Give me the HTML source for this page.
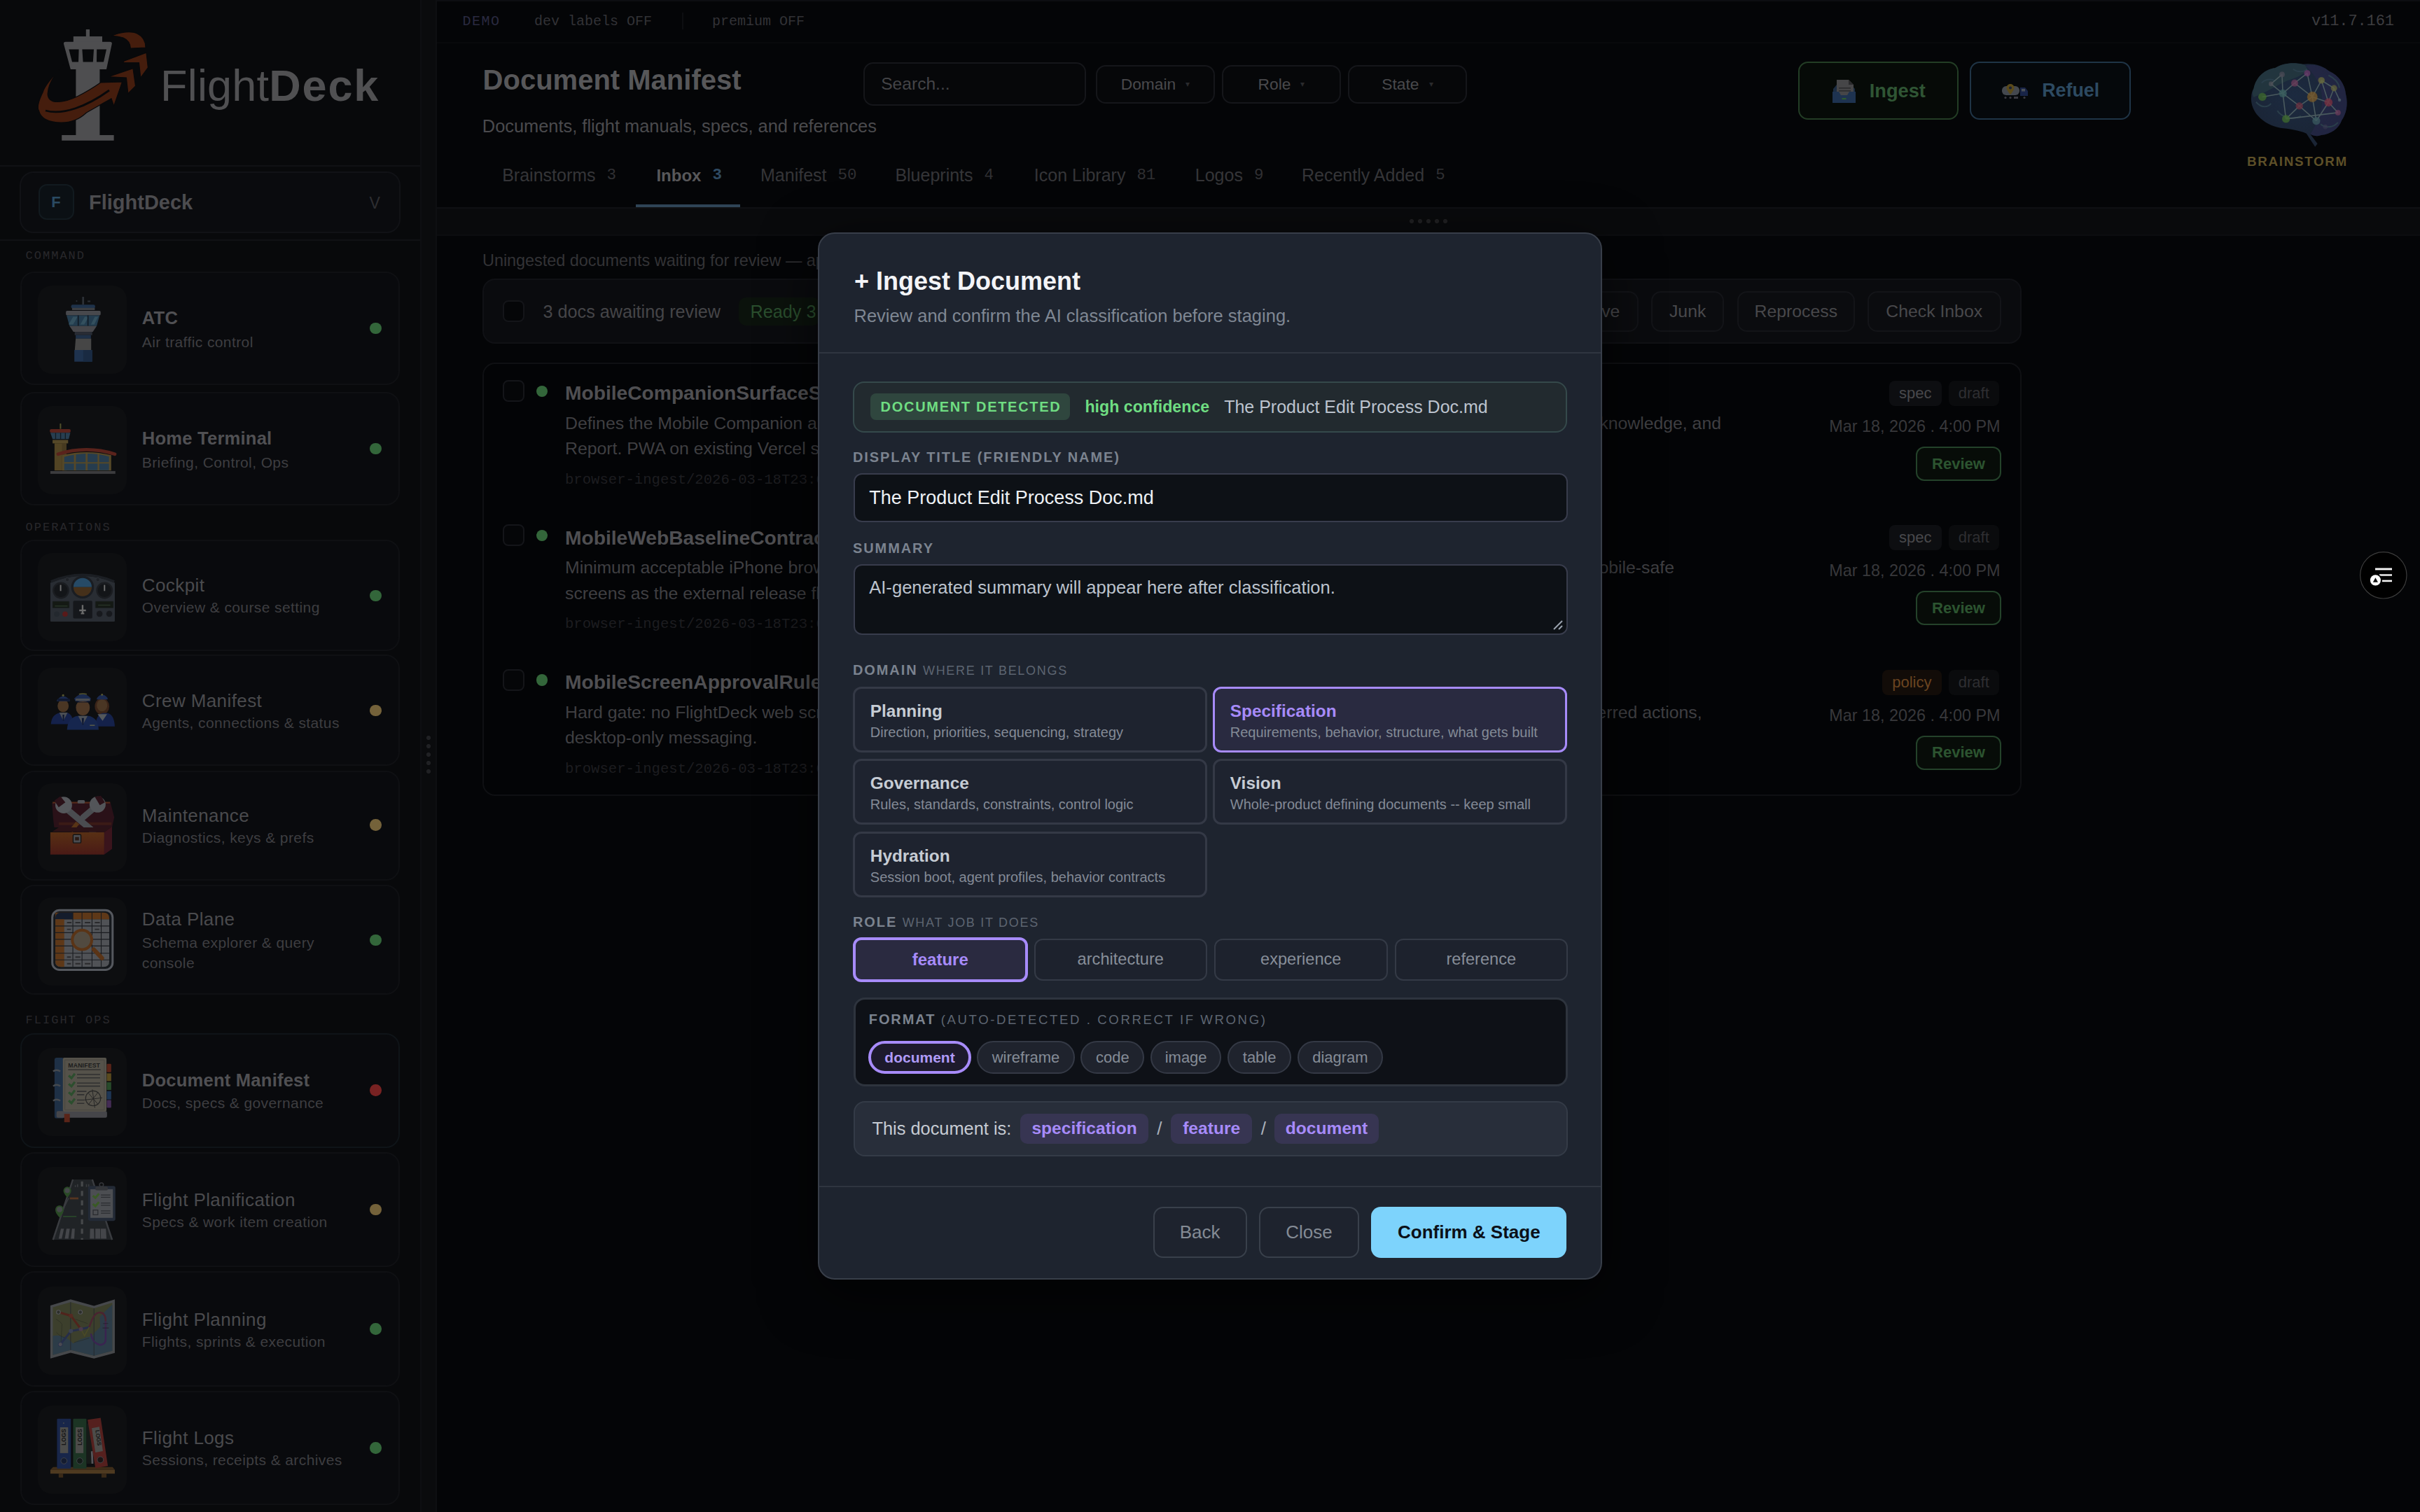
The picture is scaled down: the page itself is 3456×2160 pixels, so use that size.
<!DOCTYPE html>
<html><head><meta charset="utf-8">
<style>
*{box-sizing:border-box;margin:0;padding:0}
html,body{width:3456px;height:2160px;overflow:hidden;background:#040507}
#root{position:relative;width:1728px;height:1080px;zoom:2;font-family:"Liberation Sans",sans-serif;background:#040507;overflow:hidden}
.abs{position:absolute}
.mono{font-family:"Liberation Mono",monospace}
#sb{position:absolute;left:0;top:0;width:300px;height:1080px;background:#08090b}
#handle{position:absolute;left:300px;top:0;width:12px;height:1080px;background:#0a0b0d;border-left:1px solid #0e0f12;border-right:1px solid #0e0f12}
#main{position:absolute;left:312px;top:0;width:1416px;height:1080px;background:#040507}
#modal{position:absolute;left:584px;top:166px;width:560px;height:748px;background:#1e242f;border:1px solid #383e49;border-radius:12px;box-shadow:0 10px 40px rgba(0,0,0,.6)}
#modal .det{border:1.1px solid #35494b;background:#222a2f;border-radius:8px;display:flex;align-items:center;padding-left:11.5px}
#modal .badge{display:inline-block;height:19px;line-height:19px;padding:0 6.5px 0 7.3px;border-radius:4px;background:#2f463e;color:#6fdd82;font-size:10px;font-weight:bold;letter-spacing:.85px}
#modal .lbl{font-size:10px;line-height:10px;font-weight:bold;letter-spacing:.95px;color:#7b838f;white-space:nowrap}
#modal .lbl .sub{font-weight:normal;font-size:9px;letter-spacing:.85px;color:#5d6571}
#modal .lbl .sub.f{font-size:9.3px;letter-spacing:1.3px}
#modal .inp{background:#0d1116;border:1.2px solid #383c4c;border-radius:6px}
#modal .dcard{width:253px;height:47px;border:1.5px solid #343946;border-radius:6px;background:#1e232f}
#modal .dcard .dt{position:absolute;left:10.9px;top:10px;font-size:12.2px;line-height:12.2px;font-weight:bold;color:#c6ccd4}
#modal .dcard .dd{position:absolute;left:10.9px;top:26px;font-size:10px;line-height:10px;color:#838a96;white-space:nowrap}
#modal .dcard.sel{border-color:#a78bfa;background:#292a40}
#modal .dcard.sel .dt{color:#a78bfa}
#modal .roles{display:grid;grid-template-columns:repeat(4,123.75px);gap:5px;width:510px}
#modal .rb{height:30.4px;border:1.2px solid #343a46;border-radius:6px;display:flex;align-items:center;justify-content:center;font-size:11.8px;color:#878e99;background:#1d222d}
#modal .rb.sel{margin:-1px -.75px;height:32.4px;border:2px solid #a78bfa;background:#2a2a40;color:#a78bfa;font-weight:bold;font-size:12px}
#modal .fmt{background:#0e1117;border:1.5px solid #2e343e;border-radius:8px}
#modal .chips{display:flex;gap:4.3px}
#modal .chip{display:inline-flex;align-items:center;justify-content:center;height:23.9px;border-radius:12px;background:#1f232d;border:1.1px solid #343945;font-size:11px;color:#858c97}
#modal .chip.sel{border:2px solid #a78bfa;background:#1d1a2c;color:#b09af7;font-weight:bold;font-size:10.5px}
#modal .sumbox{background:#282e3a;border:1.1px solid #343b47;border-radius:8px;display:flex;align-items:center}
#modal .pill{display:inline-flex;align-items:center;justify-content:center;height:21.6px;border-radius:5px;background:#373552;color:#a78bfa;font-weight:bold;font-size:12.3px}
#modal .slash{display:inline-block;width:16px;text-align:center;font-size:13px;color:#aab1bb}
#modal .btn2{border:1.1px solid #39404b;border-radius:7px;display:flex;align-items:center;justify-content:center;font-size:13px;color:#848b95;background:#1e232e}
#modal .cta{border-radius:7px;display:flex;align-items:center;justify-content:center;font-size:13px;font-weight:bold;color:#0b1018;background:#7dd3fc}
.hbox{border:1px solid #15161a;border-radius:7px;background:#060709;display:flex;align-items:center}
.hbox.c{justify-content:center}
.caret{font-size:6px;color:#2a2a2d;margin-left:7px}
.hbtn{border:1px solid;border-radius:7px;background:#06080a;display:flex;align-items:center;justify-content:center}
.tab{top:119.1px;font-size:12.5px;line-height:12.5px;color:#353538;white-space:nowrap}
.tab .cnt{font-family:"Liberation Mono",monospace;font-size:11.2px;margin-left:8px;color:#303033;position:relative;top:-1.6px}
.tab.act{color:#58585a;font-weight:bold;font-size:12px}
.tab.act .cnt{color:#2f4a62;font-weight:bold}
.tbar{background:#0a0b0e;border:1px solid #101115;border-radius:9px}
.tbtn{top:208px;height:29px;border:1px solid #131418;border-radius:7px;background:#0b0c0f;display:flex;align-items:center;justify-content:center;font-size:12.4px;color:#48484b}
.cb{width:15.5px;height:15.5px;border:1px solid #141519;border-radius:4px;background:#050608}
.list{background:#030406;border:1px solid #0f1013;border-radius:9px}
.dot{width:8.2px;height:8.2px;border-radius:50%}
.dot.g{background:#33663a}
.dot.y{background:#74623a}
.dot.r{background:#782222}
.it{font-size:14.1px;line-height:14.1px;font-weight:bold;color:#4f4f52;white-space:nowrap}
.idesc{font-size:12.4px;line-height:12.4px;color:#3f3f42;white-space:nowrap}
.ipath{font-family:"Liberation Mono",monospace;font-size:10.3px;line-height:10.5px;color:#1d1d20;white-space:nowrap}
.tag{height:18px;padding:0 7px;border-radius:4px;font-size:11px;line-height:18px;background:#0d0e11;color:#48484b}
.tag.draft{background:#0a0b0d;color:#2e2e31}
.tag.policy{background:#120c08;color:#6a4420}
.idate{font-size:11.7px;line-height:11.7px;color:#38383b;white-space:nowrap}
.rev{width:60.6px;height:24.5px;border:1.2px solid #24422a;border-radius:6px;background:#070c08;display:flex;align-items:center;justify-content:center;font-size:11px;font-weight:bold;color:#2c5430}
.wsc{border:1px solid #111216;border-radius:10px;background:#0a0b0e}
.slbl{font-family:"Liberation Mono",monospace;font-size:8.5px;line-height:8.5px;letter-spacing:1px;color:#28282b}
.scard{border:1px solid #0f1013;border-radius:10px;background:#090a0d}
.scard.act{border-color:#0f1418}
.ibox{width:63.5px;height:63px;border-radius:10px;background:#0d0e10}
.stitle{color:#4a4a4d;white-space:nowrap;letter-spacing:.2px}
.stitle.b{font-weight:bold;color:#505053;letter-spacing:.1px}
.ssub{font-size:10.5px;line-height:10.5px;letter-spacing:.2px;color:#3e3e41;white-space:nowrap}
.ibox svg{filter:brightness(.82) saturate(.85)}
@media (max-width:2000px){html,body{width:1728px;height:1080px}#root{zoom:1}}

</style></head><body><div id="root">
<div id="sb"></div>
<div id="handle"></div>
<svg class="abs" style="left:0;top:0" width="120" height="110" viewBox="0 0 120 110">
<g fill="#4e4e50">
<rect x="61.4" y="21" width="2.6" height="5.5"/>
<rect x="52.4" y="26" width="20.6" height="4.2"/>
<path d="M47 29.9H78.4Q80.4 29.9 79.8 31.8L76 49.5H50.4L45.6 31.8Q45 29.9 47 29.9Z"/>
<rect x="54.2" y="49" width="17" height="48"/>
<rect x="44.1" y="96.5" width="37.2" height="3.9"/>
</g>
<path d="M49.2 35.2H56.3L56 44.2H51.5zM58.7 35.2H67L66.4 44.2H59.3zM69.1 35.2H76L74 44.2H69z" fill="#08090b"/>
<g fill="#451d0d" stroke="#08090b" stroke-width=".6">
<path d="M45.6 46C38 54 31.5 62 30.7 65.6C27.5 72 26.5 77 27.7 79C29 84.5 34 87.5 43.8 87.6C52 87.6 58 84 61.7 80.5C68 77 74 73.5 79.5 70.4L81.3 75.7L87.3 58.5L71.8 59C66 63 60 66.5 55.7 68.6C50 71.5 44 73 39.6 72.7C35 72 33.5 69 34.3 65.5C34.8 60 39 53 45.6 46Z"/>
<path d="M88.5 43.6L104.5 37.6L105.7 48.3L100.4 55.5L99.2 44.8L87.9 44.8Z"/>
<path d="M78.9 54.3L95 48.9L96.8 61.4L91.4 66.8L90.2 55.5L78.9 54.9Z"/>
<path d="M79.5 25.7C86 22.5 94 22 98 24C102 26 104 29 104 34L93.2 34.6C93 31 91.5 28.5 88 27C85 26 82 25.7 79.5 25.7Z"/>
</g>
<path d="M32.5 79C45 82.5 62 76 78 64.5" stroke="#08090b" stroke-width="1.4" fill="none"/>
</svg>
<div class="abs" style="left:114.5px;top:45.3px;font-size:31.5px;line-height:31.5px;color:#505052;white-space:nowrap;letter-spacing:.1px">Flight<b style="letter-spacing:.9px">Deck</b></div>
<div class="abs" style="left:0;top:118px;width:300px;height:1px;background:#101114"></div>
<div class="abs wsc" style="left:14px;top:122.5px;width:272px;height:44px"></div>
<div class="abs" style="left:27.3px;top:131.5px;width:25.5px;height:25.5px;border:1px solid #121a1f;background:#0b1014;border-radius:6px;color:#2a4a62;font-weight:bold;font-size:11px;display:flex;align-items:center;justify-content:center">F</div>
<div class="abs" style="left:63.5px;top:137.6px;font-size:14.5px;line-height:14.5px;font-weight:bold;color:#4c4c4f">FlightDeck</div>
<div class="abs" style="left:263.7px;top:139.5px;font-size:11.5px;line-height:11.5px;color:#2e2e31">V</div>
<div class="abs" style="left:0;top:171px;width:300px;height:1px;background:#101114"></div>
<div class="abs slbl" style="left:18.3px;top:178.6px">COMMAND</div>
<div class="abs slbl" style="left:18.3px;top:372.6px">OPERATIONS</div>
<div class="abs slbl" style="left:18.3px;top:724.5px">FLIGHT OPS</div>
<div class="abs scard" style="left:14.3px;top:194.2px;width:271.4px;height:80.7px"><div class="abs ibox" style="left:11.6px;top:8.85px"></div></div>
<div class="abs stitle b" style="left:101.4px;top:221.06px;font-size:12.8px;line-height:12.8px">ATC</div>
<div class="abs ssub" style="left:101.4px;top:239.11px">Air traffic control</div>
<div class="abs dot g" style="left:264.2px;top:230.40px"></div>
<div class="abs scard" style="left:14.3px;top:279.8px;width:271.4px;height:81.05px"><div class="abs ibox" style="left:11.6px;top:9.02px"></div></div>
<div class="abs stitle b" style="left:101.4px;top:307.06px;font-size:12.8px;line-height:12.8px">Home Terminal</div>
<div class="abs ssub" style="left:101.4px;top:325.11px">Briefing, Control, Ops</div>
<div class="abs dot g" style="left:264.2px;top:316.30px"></div>
<div class="abs scard" style="left:14.3px;top:385.6px;width:271.4px;height:79.35px"><div class="abs ibox" style="left:11.6px;top:8.17px"></div></div>
<div class="abs stitle" style="left:101.4px;top:411.50px;font-size:13px;line-height:13px">Cockpit</div>
<div class="abs ssub" style="left:101.4px;top:428.51px">Overview &amp; course setting</div>
<div class="abs dot g" style="left:264.2px;top:421.40px"></div>
<div class="abs scard" style="left:14.3px;top:467.65px;width:271.4px;height:79.3px"><div class="abs ibox" style="left:11.6px;top:8.15px"></div></div>
<div class="abs stitle" style="left:101.4px;top:493.80px;font-size:13px;line-height:13px">Crew Manifest</div>
<div class="abs ssub" style="left:101.4px;top:511.11px">Agents, connections &amp; status</div>
<div class="abs dot y" style="left:264.2px;top:503.50px"></div>
<div class="abs scard" style="left:14.3px;top:550.5px;width:271.4px;height:78.5px"><div class="abs ibox" style="left:11.6px;top:7.75px"></div></div>
<div class="abs stitle" style="left:101.4px;top:575.90px;font-size:13px;line-height:13px">Maintenance</div>
<div class="abs ssub" style="left:101.4px;top:592.81px">Diagnostics, keys &amp; prefs</div>
<div class="abs dot y" style="left:264.2px;top:585.20px"></div>
<div class="abs scard" style="left:14.3px;top:632.15px;width:271.4px;height:78.55px"><div class="abs ibox" style="left:11.6px;top:7.77px"></div></div>
<div class="abs stitle" style="left:101.4px;top:650.20px;font-size:13px;line-height:13px">Data Plane</div>
<div class="abs ssub" style="left:101.4px;top:667.81px">Schema explorer &amp; query</div>
<div class="abs ssub" style="left:101.4px;top:682.51px">console</div>
<div class="abs dot g" style="left:264.2px;top:667.30px"></div>
<div class="abs scard act" style="left:14.3px;top:737.85px;width:271.4px;height:82.15px"><div class="abs ibox" style="left:11.6px;top:9.58px"></div></div>
<div class="abs stitle b" style="left:101.4px;top:765.56px;font-size:12.8px;line-height:12.8px">Document Manifest</div>
<div class="abs ssub" style="left:101.4px;top:782.51px">Docs, specs &amp; governance</div>
<div class="abs dot r" style="left:264.2px;top:774.70px"></div>
<div class="abs scard" style="left:14.3px;top:822.85px;width:271.4px;height:82.4px"><div class="abs ibox" style="left:11.6px;top:9.70px"></div></div>
<div class="abs stitle" style="left:101.4px;top:850.70px;font-size:13px;line-height:13px">Flight Planification</div>
<div class="abs ssub" style="left:101.4px;top:867.51px">Specs &amp; work item creation</div>
<div class="abs dot y" style="left:264.2px;top:859.90px"></div>
<div class="abs scard" style="left:14.3px;top:908.0px;width:271.4px;height:82.5px"><div class="abs ibox" style="left:11.6px;top:9.75px"></div></div>
<div class="abs stitle" style="left:101.4px;top:935.90px;font-size:13px;line-height:13px">Flight Planning</div>
<div class="abs ssub" style="left:101.4px;top:952.81px">Flights, sprints &amp; execution</div>
<div class="abs dot g" style="left:264.2px;top:945.20px"></div>
<div class="abs scard" style="left:14.3px;top:993.35px;width:271.4px;height:81.9px"><div class="abs ibox" style="left:11.6px;top:9.45px"></div></div>
<div class="abs stitle" style="left:101.4px;top:1020.40px;font-size:13px;line-height:13px">Flight Logs</div>
<div class="abs ssub" style="left:101.4px;top:1037.31px">Sessions, receipts &amp; archives</div>
<div class="abs dot g" style="left:264.2px;top:1030.20px"></div>
<div class="abs" style="left:304.5px;top:525.5px;width:3px;height:30px;background:radial-gradient(circle at 1.5px 1.5px,#202124 1.4px,transparent 1.6px) 0 0/3px 6px repeat-y"></div>
<svg class="abs" style="left:30.0px;top:200.0px" width="60.0" height="60.0" viewBox="0 0 1512 1512">
<rect x="722" y="303" width="35" height="140" fill="#2c3036"/>
<circle cx="623" cy="379" r="14" fill="#2a2e34"/><rect x="820" y="370" width="50" height="28" fill="#2a2e34"/>
<rect x="524" y="443" width="432" height="70" rx="30" fill="#1e324a"/>
<rect x="541" y="502" width="409" height="40" fill="#3c3e42"/>
<rect x="430" y="554" width="625" height="82" rx="22" fill="#48494d"/>
<path d="M442 636H1037L984 828H495Z" fill="#233c4e"/>
<path d="M480 800L560 660H640L560 800ZM690 800L770 660H840L760 800ZM880 800L950 660H1010L940 800Z" fill="#34505e"/>
<path d="M652 636V828M827 636V828" stroke="#121c26" stroke-width="22"/>
<path d="M495 828H984L915 933H565Z" fill="#46464a"/>
<rect x="588" y="933" width="315" height="59" fill="#282c34"/>
<rect x="606" y="992" width="274" height="64" fill="#1e3046"/>
<path d="M606 1056H885L885 1260H590Z" fill="#464646"/>
<rect x="582" y="1260" width="321" height="210" fill="#1e324e"/>
<rect x="742" y="1260" width="161" height="210" fill="#192a42"/>
</svg>
<svg class="abs" style="left:30.0px;top:295.0px" width="60.0" height="60.0" viewBox="0 0 1512 1512">
<rect x="320" y="190" width="25" height="95" fill="#50502a"/>
<rect x="140" y="290" width="375" height="62" rx="25" fill="#5a231c"/>
<path d="M150 355H510L480 470H190Z" fill="#283e50"/>
<path d="M245 355V470M335 355V470M420 355V470" stroke="#121a22" stroke-width="16"/>
<rect x="190" y="485" width="280" height="62" fill="#554828"/>
<rect x="225" y="545" width="215" height="490" fill="#524424"/>
<rect x="360" y="545" width="80" height="490" fill="#463a20"/>
<path d="M365 760Q800 650 1245 760V1035H365Z" fill="#554828"/>
<path d="M400 790Q480 765 575 752V885H400ZM610 745Q700 735 785 732V885H610ZM820 732Q910 733 1000 742V885H820ZM1030 748Q1120 760 1205 785V885H1030ZM400 910H575V1030H400ZM610 910H785V1030H610ZM820 910H1000V1030H820ZM1030 910H1205V1030H1030Z" fill="#263c4e"/>
<path d="M290 740Q800 580 1310 740" stroke="#5a231c" stroke-width="60" fill="none" stroke-linecap="round"/>
<rect x="150" y="1045" width="1170" height="50" fill="#3c3c3e"/>
</svg>
<svg class="abs" style="left:30.0px;top:390.0px" width="60.0" height="60.0" viewBox="0 0 1512 1512">
<path d="M150 660Q730 420 1310 660V1345Q1310 1360 1295 1360H165Q150 1360 150 1345Z" fill="#292d33"/>
<path d="M160 640Q730 400 1300 640" stroke="#1b1e23" stroke-width="45" fill="none"/>
<circle cx="340" cy="800" r="150" fill="#1b1d21"/><circle cx="340" cy="800" r="120" fill="#131518"/>
<path d="M335 700V810" stroke="#707070" stroke-width="24"/>
<circle cx="1125" cy="800" r="150" fill="#1b1d21"/><circle cx="1125" cy="800" r="120" fill="#131518"/>
<path d="M1125 700V810" stroke="#707070" stroke-width="24"/>
<circle cx="730" cy="740" r="205" fill="#1a1d22"/>
<path d="M565 740A165 165 0 0 1 895 740Z" fill="#264a66"/><path d="M565 740A165 165 0 0 0 895 740Z" fill="#45301a"/>
<circle cx="455" cy="605" r="35" fill="#1e2126" stroke="#30343a" stroke-width="10"/><circle cx="1005" cy="605" r="35" fill="#1e2126" stroke="#30343a" stroke-width="10"/>
<rect x="190" y="995" width="300" height="120" rx="10" fill="#141914" stroke="#1e2226" stroke-width="10"/>
<rect x="960" y="995" width="325" height="120" rx="10" fill="#141914" stroke="#1e2226" stroke-width="10"/>
<path d="M230 1080h230M1010 1065h220" stroke="#263326" stroke-width="20"/>
<rect x="560" y="985" width="345" height="320" rx="22" fill="#15171b"/>
<path d="M730 1060V1220M670 1160H790M700 1215H760" stroke="#6a6a6a" stroke-width="30"/>
<circle cx="265" cy="1225" r="48" fill="#23282e"/><circle cx="415" cy="1225" r="48" fill="#581a1a"/>
<circle cx="1035" cy="1220" r="62" fill="#17191d" stroke="#2a2d33" stroke-width="15"/><circle cx="1210" cy="1220" r="62" fill="#17191d" stroke="#2a2d33" stroke-width="15"/>
</svg>
<svg class="abs" style="left:30.0px;top:480.0px" width="60.0" height="60.0" viewBox="0 0 1512 1512">
<path d="M160 940Q170 760 330 730H450Q560 760 560 940Z" fill="#14214a"/>
<path d="M310 730L385 880L460 730Z" fill="#4a4e54"/><path d="M370 770H400L395 880H375Z" fill="#0c1630"/>
<ellipse cx="380" cy="610" rx="100" ry="112" fill="#4a3624"/>
<path d="M270 505Q380 370 500 505V525H265Z" fill="#1a294c"/><rect x="285" y="480" width="215" height="40" fill="#10182e"/><circle cx="380" cy="420" r="20" fill="#55552e"/>
<ellipse cx="1080" cy="620" rx="130" ry="150" fill="#3a2418"/>
<path d="M960 980Q970 770 1090 740H1180Q1300 770 1310 980Z" fill="#14214a"/>
<path d="M1000 760L1090 880L1170 760Z" fill="#54585c"/>
<ellipse cx="1080" cy="600" rx="95" ry="108" fill="#4a3624"/>
<path d="M990 465Q1080 355 1180 465V495H985Z" fill="#1c2b50"/><circle cx="1080" cy="410" r="18" fill="#55552e"/>
<path d="M450 1040Q460 820 640 790H840Q1010 820 1020 1040Z" fill="#16264e"/>
<path d="M650 790L735 950L820 790Z" fill="#4c5056"/><path d="M715 830H755L745 950H725Z" fill="#0c1630"/>
<path d="M860 960H950" stroke="#55584a" stroke-width="20"/>
<ellipse cx="735" cy="640" rx="125" ry="140" fill="#4e3826"/>
<path d="M580 475Q735 320 880 475L870 525H600Z" fill="#1a2a4e"/><rect x="605" y="478" width="255" height="42" fill="#4a4c50"/>
<path d="M620 520Q735 565 850 520V548H620Z" fill="#0c1428"/><path d="M665 400Q735 380 805 400" stroke="#55552e" stroke-width="20" fill="none"/>
</svg>
<svg class="abs" style="left:30.0px;top:560.0px" width="60.0" height="60.0" viewBox="0 0 1512 1512">
<path d="M180 340L1230 330L1300 600L1260 780H220L200 620Z" fill="#2a1118"/>
<path d="M190 335H1225" stroke="#55291a" stroke-width="30"/>
<rect x="640" y="290" width="130" height="60" rx="20" fill="#505256"/>
<rect x="300" y="690" width="950" height="50" fill="#3a1a16"/>
<path d="M520 850L640 700" stroke="#583416" stroke-width="75"/>
<path d="M740 600L1000 380" stroke="#4a4c50" stroke-width="110" stroke-linecap="round"/>
<path d="M1000 370m-145 0a145 145 0 1 0 290 0a145 145 0 1 0-290 0" fill="#535559"/>
<path d="M950 230L1060 210L1130 330L1040 380Z" fill="#2a1118"/>
<path d="M420 430L920 850" stroke="#4a4c50" stroke-width="115" stroke-linecap="round"/>
<path d="M390 380m-150 0a150 150 0 1 0 300 0a150 150 0 1 0-300 0" fill="#55575b"/>
<path d="M330 220L220 300L300 420L420 330Z" fill="#2a1118"/>
<path d="M180 860L300 780H1250L1120 870Z" fill="#2a1216"/>
<defs><linearGradient id="tbg" x1="0" y1="0" x2="0" y2="1"><stop offset="0" stop-color="#583014"/><stop offset="1" stop-color="#4a1a16"/></linearGradient></defs>
<rect x="150" y="870" width="970" height="400" fill="url(#tbg)"/>
<path d="M1120 870L1260 770V1170L1120 1270Z" fill="#3a141c"/>
<rect x="560" y="910" width="140" height="150" rx="15" fill="#4a4c50" stroke="#141414" stroke-width="18"/>
<rect x="595" y="955" width="70" height="60" fill="#2a1a14"/>
</svg>
<svg class="abs" style="left:30.0px;top:640.0px" width="60.0" height="60.0" viewBox="0 0 1512 1512">
<rect x="185" y="255" width="1085" height="1075" rx="130" fill="#15181c" stroke="#55585e" stroke-width="38"/>
<path d="M240 420V1175Q240 1275 340 1275H1110Q1210 1275 1210 1175V420Z" fill="#505256"/>
<path d="M240 300H1110Q1210 300 1210 400V420H240Z" fill="#5e3818"/>
<path d="M240 400Q240 300 340 300H555V420H240Z" fill="#141c2c"/>
<path d="M240 420H400V1275H340Q240 1275 240 1175Z" fill="#5e3818"/>
<path d="M555 300V1275M720 300V1275M900 300V1275M1065 300V1275M240 540H1210M240 660H1210M240 780H1210M240 900H1210M240 1030H1210M240 1150H1210" stroke="#1a1c20" stroke-width="14"/>
<path d="M450 480h80M600 480h90M770 480h100M950 480h90M450 600h70M950 600h80M450 1100h70M600 1100h90M450 1220h70M600 1220h90M770 1220h100" stroke="#2a2a2c" stroke-width="25"/>
<circle cx="720" cy="790" r="175" fill="#514a40" stroke="#5a3416" stroke-width="50"/>
<path d="M930 960L1080 1120" stroke="#5a3416" stroke-width="75" stroke-linecap="round"/>
</svg>
<svg class="abs" style="left:30.0px;top:750.0px" width="60.0" height="60.0" viewBox="0 0 1512 1512">
<rect x="225" y="140" width="170" height="1090" rx="40" fill="#1e3046"/>
<rect x="260" y="1100" width="910" height="120" rx="30" fill="#46464a"/>
<rect x="375" y="140" width="785" height="970" rx="25" fill="#55524a"/>
<rect x="410" y="180" width="710" height="900" rx="10" fill="none" stroke="#46443e" stroke-width="10"/>
<text x="470" y="320" font-family="Liberation Sans" font-weight="bold" font-size="110" fill="#1c1c1c" textLength="575">MANIFEST</text>
<path d="M470 355H1055" stroke="#2a2a2a" stroke-width="15"/>
<path d="M480 460L530 505L590 425M480 610L530 655L590 575M480 760L530 805L590 725M480 910L530 955L590 875" stroke="#2c4e2e" stroke-width="40" fill="none"/>
<path d="M630 440H1045M630 500H1045M630 595H1045M630 650H1045M630 745H800M630 805H760M630 900H760M630 960H760" stroke="#303030" stroke-width="20"/>
<circle cx="920" cy="870" r="135" fill="none" stroke="#252525" stroke-width="14"/>
<path d="M905 710L950 1040M760 900L1085 860M830 770L1010 980M1010 760L830 990" stroke="#252525" stroke-width="12"/>
<path d="M200 385Q260 340 330 385M200 650Q260 605 330 650M200 915Q260 870 330 915" stroke="#45494e" stroke-width="30" fill="none"/>
<rect x="1165" y="250" width="80" height="150" rx="15" fill="#5a2418"/>
<rect x="1165" y="420" width="80" height="140" fill="#5a4a1e"/>
<rect x="1165" y="580" width="80" height="140" fill="#284a2a"/>
<rect x="1165" y="740" width="80" height="150" fill="#1e3654"/>
<rect x="1165" y="900" width="80" height="140" rx="15" fill="#442c54"/>
<rect x="400" y="1150" width="100" height="150" fill="#5a2418"/>
</svg>
<svg class="abs" style="left:30.0px;top:830.0px" width="60.0" height="60.0" viewBox="0 0 1512 1512">
<path d="M555 315H905L1280 1400H180Z" fill="#202326"/>
<path d="M555 315L200 1400M905 315L1260 1400" stroke="#3a3c40" stroke-width="30"/>
<path d="M720 350V1400" stroke="#46484a" stroke-width="40" stroke-dasharray="90 80"/>
<path d="M300 1380L340 1200H395L355 1380ZM410 1380L440 1200H500L475 1380ZM520 1380L540 1200H590L580 1380ZM860 1380L865 1200H935L940 1380ZM960 1380L960 1200H1045L1050 1380ZM1060 1380L1055 1200H1150L1160 1380Z" fill="#44464a"/>
<path d="M600 420V450M640 400V450M800 400V450M840 400V450" stroke="#3a3c40" stroke-width="20"/>
<path d="M480 650Q400 800 330 1000" stroke="#3a3c40" stroke-width="16" fill="none"/>
<path d="M500 655H655" stroke="#553520" stroke-width="35"/>
<path d="M380 980H620" stroke="#2a4a2a" stroke-width="20"/>
<path d="M455 640C400 580 385 545 385 515A70 70 0 0 1 525 515C525 545 510 580 455 640Z" fill="#2a4a26"/><circle cx="455" cy="515" r="45" fill="#45484a"/>
<path d="M315 1000C250 930 240 890 240 855A75 75 0 0 1 390 855C390 890 380 930 315 1000Z" fill="#2a4a26"/><circle cx="315" cy="855" r="50" fill="#45484a"/>
<rect x="830" y="430" width="490" height="630" rx="35" fill="#232a36"/>
<rect x="870" y="490" width="405" height="515" fill="#4c4e52"/>
<rect x="960" y="440" width="225" height="70" rx="25" fill="#333539"/>
<circle cx="1070" cy="410" r="35" fill="none" stroke="#333539" stroke-width="20"/>
<path d="M915 605L960 645L1025 570M915 755L960 795L1025 720" stroke="#3a5a26" stroke-width="38" fill="none"/>
<rect x="920" y="865" width="85" height="85" fill="none" stroke="#2a2c30" stroke-width="16"/>
<path d="M1060 595H1230M1060 635H1230M1060 740H1230M1060 780H1230M1060 880H1230M1060 920H1230" stroke="#2a2c30" stroke-width="16"/>
</svg>
<svg class="abs" style="left:30.0px;top:920.0px" width="60.0" height="60.0" viewBox="0 0 1512 1512">
<path d="M150 315L515 205L935 320L1310 205V1170L935 1270L515 1165L150 1270Z" fill="#46484b"/>
<path d="M195 345L515 255L935 365L1265 265V1130L935 1220L515 1115L195 1205Z" fill="#3c3f2c"/>
<path d="M195 860Q400 820 560 1000Q700 900 900 870Q1000 700 1265 560V1130L935 1220L515 1115L195 1205Z" fill="#2c3c48"/>
<path d="M1040 520Q1150 400 1265 300V560Q1100 650 1050 760Z" fill="#2c3c48"/>
<path d="M515 255V1115M935 365V1220" stroke="#25282c" stroke-width="12"/>
<path d="M250 560Q330 600 360 650L340 1000M600 560Q700 600 820 640M580 980Q700 950 850 900M260 800Q330 880 430 900" stroke="#282a22" stroke-width="8" fill="none"/>
<path d="M295 435L520 500L700 740" stroke="#50241c" stroke-width="38" fill="none"/>
<path d="M330 1015L520 775L700 740L850 705" stroke="#262e4a" stroke-width="38" fill="none"/>
<path d="M700 740L765 860L850 705" stroke="#4a4a26" stroke-width="20" fill="none"/>
<path d="M850 705C900 550 950 440 1040 440C1120 440 1145 520 1145 600" stroke="#4a2430" stroke-width="32" fill="none"/>
<path d="M1145 700V930C1145 1000 1080 1030 1030 1020C960 1000 900 960 880 820" stroke="#3a2450" stroke-width="32" fill="none"/>
<path d="M1145 600V700" stroke="#42244a" stroke-width="32"/>
<path d="M1100 640H1190M1090 720H1200" stroke="#2a2030" stroke-width="14"/>
<circle cx="295" cy="435" r="35" fill="#2c2e2a" stroke="#55565a" stroke-width="14"/>
<circle cx="690" cy="435" r="35" fill="#2c2e2a" stroke="#55565a" stroke-width="14"/>
<circle cx="520" cy="500" r="38" fill="#552a22"/>
<circle cx="700" cy="740" r="38" fill="#4a3a4a"/>
<circle cx="520" cy="775" r="38" fill="#3a4050"/>
<circle cx="330" cy="1015" r="38" fill="#4a4a52" stroke="#262e4a" stroke-width="12"/>
</svg>
<svg class="abs" style="left:30.0px;top:1005.0px" width="60.0" height="60.0" viewBox="0 0 1512 1512">
<path d="M200 1080H1270L1310 1130H150Z" fill="#3e2c18"/>
<rect x="150" y="1130" width="1160" height="70" fill="#4e3a20"/>
<rect x="300" y="1200" width="80" height="70" fill="#3a2a18"/><rect x="1070" y="1200" width="90" height="70" fill="#3a2a18"/>
<rect x="270" y="210" width="250" height="900" rx="15" fill="#18264a"/>
<rect x="325" y="365" width="145" height="465" fill="#4c4c4a"/>
<text transform="translate(430 690) rotate(-90)" font-family="Liberation Sans" font-weight="bold" font-size="105" fill="#151515">LOGS</text>
<circle cx="395" cy="970" r="55" fill="#141c30" stroke="#40444a" stroke-width="12"/>
<circle cx="390" cy="290" r="14" fill="#40444a"/>
<rect x="560" y="210" width="240" height="900" rx="15" fill="#1c3424"/>
<rect x="605" y="365" width="140" height="465" fill="#4c4c4a"/>
<text transform="translate(712 690) rotate(-90)" font-family="Liberation Sans" font-weight="bold" font-size="105" fill="#151515">LOGS</text>
<circle cx="680" cy="970" r="55" fill="#141c18" stroke="#40444a" stroke-width="12"/>
<path d="M800 300L880 280L920 1020H800Z" fill="#161a18"/>
<path d="M880 800L915 790L925 1020H890Z" fill="#55555a"/>
<path d="M820 230L1055 195L1185 1060L960 1100Z" fill="#55201e"/>
<path d="M895 380L1030 355L1095 795L960 820Z" fill="#4c4c4a"/>
<text transform="translate(960 420) rotate(82)" font-family="Liberation Sans" font-weight="bold" font-size="100" fill="#151515">LOGS</text>
<circle cx="1050" cy="950" r="55" fill="#1c1414" stroke="#40444a" stroke-width="12"/>
</svg>
<div id="main"></div>
<!-- top bar -->
<div class="abs" style="left:312px;top:0;width:1416px;height:1px;background:#0d0e11"></div>
<div class="abs" style="left:312px;top:30px;width:1416px;height:1px;background:#08090b"></div>
<div class="abs mono" style="left:330.2px;top:10.4px;font-size:10px;line-height:10px;letter-spacing:.75px;color:#2a2a40">DEMO</div>
<div class="abs mono" style="left:381.5px;top:10.4px;font-size:10px;line-height:10px;color:#323236">dev labels OFF</div>
<div class="abs" style="left:487px;top:9px;width:1px;height:12px;background:#0d0e11"></div>
<div class="abs mono" style="left:508.5px;top:10.4px;font-size:10px;line-height:10px;color:#323236">premium OFF</div>
<div class="abs mono" style="left:1650.5px;top:10.2px;font-size:11px;line-height:11px;letter-spacing:-.05px;color:#3d3d40">v11.7.161</div>
<!-- header -->
<div class="abs" style="left:344.8px;top:47px;font-size:20px;line-height:20px;font-weight:bold;color:#575759">Document Manifest</div>
<div class="abs" style="left:344.4px;top:84px;font-size:12.7px;line-height:12.7px;color:#4a4a4d">Documents, flight manuals, specs, and references</div>
<div class="abs hbox" style="left:616.3px;top:44.4px;width:159.2px;height:31px"><span style="margin-left:11.8px;font-size:12.3px;color:#444447">Search...</span></div>
<div class="abs hbox c" style="left:782.5px;top:46.3px;width:85px;height:27.7px"><span style="font-size:11.4px;color:#49494c">Domain</span><span class="caret">▾</span></div>
<div class="abs hbox c" style="left:872.5px;top:46.3px;width:85px;height:27.7px"><span style="font-size:11.4px;color:#49494c">Role</span><span class="caret">▾</span></div>
<div class="abs hbox c" style="left:962.3px;top:46.3px;width:85.3px;height:27.7px"><span style="font-size:11.4px;color:#49494c">State</span><span class="caret">▾</span></div>
<div class="abs hbtn" style="left:1284.2px;top:44.2px;width:114.1px;height:41.3px;border-color:#233d25;background:#060a07">
  <svg width="18.5" height="17" viewBox="0 0 37 34" style="margin-right:8.8px"><path d="M3 14L8 8H29L34 14V33H3z" fill="#1b2c42"/><path d="M8 1H25L32 8V26H8z" fill="#464648"/><path d="M25 1V8H32z" fill="#2a2a2c"/><rect x="11" y="12" width="17" height="1.6" fill="#2c2c2e"/><rect x="11" y="16" width="17" height="1.6" fill="#2c2c2e"/><path d="M2 18H11L14 23H23L26 18H35V34H2z" fill="#1e3350"/><rect x="15.5" y="27" width="6" height="2.2" fill="#2e5a2e"/></svg>
  <span style="font-size:13.6px;font-weight:bold;color:#2f5534">Ingest</span></div>
<div class="abs hbtn" style="left:1406.6px;top:44.2px;width:115px;height:41.3px;border-color:#1f3446;background:#05080b">
  <svg width="20" height="13" viewBox="0 0 40 26" style="margin-right:9px"><rect x="1" y="6" width="25" height="13" rx="6" fill="#44484e"/><path d="M27 8H34L38 13V20H27z" fill="#182448"/><rect x="29" y="10" width="5" height="3.5" fill="#4a5058"/><path d="M13 3C16.5 3 18.5 5.5 18.5 8.5C18.5 12 13 18 13 18C13 18 7.5 12 7.5 8.5C7.5 5.5 9.5 3 13 3z" fill="#5a4a1a"/><circle cx="13" cy="8.5" r="2" fill="#1a2238"/><circle cx="6" cy="22.5" r="1.6" fill="#3a3a40"/><circle cx="13" cy="22.5" r="1.6" fill="#3a3a40"/><rect x="18" y="21" width="6" height="3" fill="#3a3a40"/><circle cx="33" cy="22.5" r="1.6" fill="#3a3a40"/></svg>
  <span style="font-size:13.4px;font-weight:bold;color:#2d4a62">Refuel</span></div>
<!-- brain -->
<svg class="abs" style="left:1598px;top:38px" width="85" height="85" viewBox="0 0 1512 1512"><defs><radialGradient id="bgl" cx="45%" cy="40%" r="60%"><stop offset="0" stop-color="#1c2a40"/><stop offset="1" stop-color="#1a2434"/></radialGradient></defs><path d="M200 450C230 300 350 200 470 190C560 130 700 110 820 140C950 120 1080 160 1160 230C1280 280 1360 400 1370 520C1400 640 1380 760 1320 850C1280 960 1180 1030 1060 1040C1000 1060 950 1050 920 1030L1010 1150L980 1190L870 1020C780 980 640 960 540 950C440 930 330 880 260 800C190 730 160 620 170 560C170 520 180 480 200 450Z" fill="url(#bgl)"/><path d="M200 450C230 300 350 200 470 190C560 130 700 110 820 140C860 150 880 170 870 220C820 300 650 330 560 380C450 440 300 520 200 560C180 520 185 480 200 450Z" fill="#243a40" opacity=".8"/><path d="M860 160C950 130 1080 160 1160 230C1280 280 1360 400 1370 520C1400 640 1380 760 1320 850C1280 960 1180 1030 1060 1040C1000 1060 950 1050 920 1030C1000 900 1100 700 1060 500C1030 350 950 250 860 160Z" fill="#28264a" opacity=".55"/><path d="M230 620C300 700 380 690 420 640M500 730C560 820 700 850 800 800M300 380C340 330 420 320 470 350M1050 900C1120 960 1220 940 1270 880M1150 280C1230 320 1280 380 1290 440M700 200C760 250 840 240 880 200" stroke="#2a3e4a" stroke-width="18" fill="none"/><g stroke="#4a5a5e" stroke-width="14"><path d="M310 555L570 510"/><path d="M570 510L560 270"/><path d="M560 270L420 390"/><path d="M420 390L570 510"/><path d="M570 510L720 380"/><path d="M720 380L880 255"/><path d="M720 380L945 555"/><path d="M880 255L945 555"/><path d="M945 555L1060 345"/><path d="M1060 345L1220 445"/><path d="M1060 345L1150 625"/><path d="M1220 445L1150 625"/><path d="M945 555L1150 625"/><path d="M945 555L780 670"/><path d="M570 510L780 670"/><path d="M570 510L610 835"/><path d="M780 670L610 835"/><path d="M610 835L1270 755"/><path d="M945 555L995 860"/><path d="M995 860L1150 625"/><path d="M1150 625L1270 755"/><path d="M1220 445L1290 595"/><path d="M780 670L995 860"/></g><g opacity=".78"><circle cx="560" cy="270" r="35" fill="#4a4a55"/><circle cx="420" cy="390" r="30" fill="#4e5058"/><circle cx="720" cy="380" r="45" fill="#6a3a5a"/><circle cx="880" cy="255" r="40" fill="#6a3a6a"/><circle cx="1060" cy="345" r="42" fill="#6a6a3a"/><circle cx="1220" cy="445" r="40" fill="#62623a"/><circle cx="570" cy="510" r="50" fill="#3a6060"/><circle cx="310" cy="555" r="52" fill="#3e6a2e"/><circle cx="945" cy="555" r="66" fill="#7a5a28"/><circle cx="1150" cy="625" r="52" fill="#7a3040"/><circle cx="1290" cy="595" r="20" fill="#50606a"/><circle cx="780" cy="670" r="46" fill="#6a3040"/><circle cx="1270" cy="755" r="35" fill="#6a3a5a"/><circle cx="610" cy="835" r="50" fill="#3e6a2e"/><circle cx="995" cy="860" r="50" fill="#3a5a60"/><circle cx="1110" cy="935" r="30" fill="#3a3a50" opacity=".8"/></g></svg>
<div class="abs" style="left:1604.5px;top:110.9px;font-size:9.4px;line-height:9.4px;font-weight:bold;letter-spacing:.85px;color:#5e5028">BRAINSTORM</div>
<!-- tabs -->
<div class="abs tab" style="left:358.6px">Brainstorms<span class="cnt">3</span></div>
<div class="abs tab act" style="left:468.7px">Inbox<span class="cnt">3</span></div>
<div class="abs tab" style="left:543px">Manifest<span class="cnt">50</span></div>
<div class="abs tab" style="left:639.2px">Blueprints<span class="cnt">4</span></div>
<div class="abs tab" style="left:738.4px">Icon Library<span class="cnt">81</span></div>
<div class="abs tab" style="left:853.4px">Logos<span class="cnt">9</span></div>
<div class="abs tab" style="left:929.5px">Recently Added<span class="cnt">5</span></div>
<div class="abs" style="left:454px;top:145.9px;width:74.5px;height:2.1px;background:#2f4456"></div>
<div class="abs" style="left:312px;top:148px;width:1416px;height:1px;background:#0f1013"></div>
<div class="abs" style="left:312px;top:149px;width:1416px;height:18.3px;background:#090a0c"></div>
<div class="abs" style="left:312px;top:167.3px;width:1416px;height:1px;background:#0c0d10"></div>
<div class="abs" style="left:1006.5px;top:156.5px;width:30px;height:3px;background:radial-gradient(circle at 1.5px 1.5px,#202022 1.4px,transparent 1.6px) 0 0/6px 3px repeat-x"></div>
<!-- content -->
<div class="abs" style="left:344.5px;top:180.3px;font-size:11.7px;line-height:11.7px;color:#333336;white-space:nowrap">Uningested documents waiting for review — approve to stage them into the manifest</div>
<div class="abs tbar" style="left:344.5px;top:199px;width:1099.2px;height:46.5px"></div>
<div class="abs cb" style="left:359.2px;top:214.6px"></div>
<div class="abs" style="left:387.8px;top:216.3px;font-size:12.6px;line-height:12.6px;color:#454548">3 docs awaiting review</div>
<div class="abs" style="left:527.5px;top:212.5px;width:58px;height:20px;border-radius:5px;background:#0b120c"></div>
<div class="abs" style="left:535.8px;top:216.3px;font-size:12.6px;line-height:12.6px;color:#2a4e2e">Ready 3</div>
<div class="abs tbtn" style="left:1097px;width:73.15px">Approve</div>
<div class="abs tbtn" style="left:1179.15px;width:51.85px">Junk</div>
<div class="abs tbtn" style="left:1240.5px;width:83.85px">Reprocess</div>
<div class="abs tbtn" style="left:1333.4px;width:95.4px">Check Inbox</div>
<div class="abs list" style="left:344.4px;top:259px;width:1099.3px;height:309.5px"></div>
<div class="abs cb" style="left:359.2px;top:271.50px"></div>
<div class="abs dot g" style="left:382.8px;top:275.30px"></div>
<div class="abs it" style="left:403.5px;top:273.70px">MobileCompanionSurfaceSpec_v1</div>
<div class="abs idesc" style="left:403.5px;top:296.50px">Defines the Mobile Companion app surface: Field Ops, Brief, and Quick</div>
<div class="abs idesc" style="right:499.00px;top:296.50px">knowledge, and</div>
<div class="abs idesc" style="left:403.5px;top:314.70px">Report. PWA on existing Vercel stack with offline-first caching.</div>
<div class="abs ipath" style="left:403.5px;top:337.40px">browser-ingest/2026-03-18T23:00:41Z/MobileCompanionSurfaceSpec_v1.md</div>
<div class="abs tag spec" style="right:341.75px;top:272.00px">spec</div>
<div class="abs tag draft" style="left:1391.4px;top:272.00px">draft</div>
<div class="abs idate" style="right:299.70px;top:299.00px">Mar 18, 2026 . 4:00 PM</div>
<div class="abs rev" style="left:1368.2px;top:319.00px">Review</div>
<div class="abs cb" style="left:359.2px;top:374.70px"></div>
<div class="abs dot g" style="left:382.8px;top:378.50px"></div>
<div class="abs it" style="left:403.5px;top:376.90px">MobileWebBaselineContract_v1</div>
<div class="abs idesc" style="left:403.5px;top:399.70px">Minimum acceptable iPhone browser behaviour for all FlightDeck mobile</div>
<div class="abs idesc" style="right:532.50px;top:399.70px">mobile-safe</div>
<div class="abs idesc" style="left:403.5px;top:417.90px">screens as the external release floor.</div>
<div class="abs ipath" style="left:403.5px;top:440.60px">browser-ingest/2026-03-18T23:00:41Z/MobileWebBaselineContract_v1.md</div>
<div class="abs tag spec" style="right:341.75px;top:375.20px">spec</div>
<div class="abs tag draft" style="left:1391.4px;top:375.20px">draft</div>
<div class="abs idate" style="right:299.70px;top:402.20px">Mar 18, 2026 . 4:00 PM</div>
<div class="abs rev" style="left:1368.2px;top:422.20px">Review</div>
<div class="abs cb" style="left:359.2px;top:477.90px"></div>
<div class="abs dot g" style="left:382.8px;top:481.70px"></div>
<div class="abs it" style="left:403.5px;top:480.10px">MobileScreenApprovalRule_v1</div>
<div class="abs idesc" style="left:403.5px;top:502.90px">Hard gate: no FlightDeck web screen ships without approval, deferred actions,</div>
<div class="abs idesc" style="right:512.70px;top:502.90px">deferred actions,</div>
<div class="abs idesc" style="left:403.5px;top:521.10px">desktop-only messaging.</div>
<div class="abs ipath" style="left:403.5px;top:543.80px">browser-ingest/2026-03-18T23:00:41Z/MobileScreenApprovalRule_v1.md</div>
<div class="abs tag policy" style="right:341.75px;top:478.40px">policy</div>
<div class="abs tag draft" style="left:1391.4px;top:478.40px">draft</div>
<div class="abs idate" style="right:299.70px;top:505.40px">Mar 18, 2026 . 4:00 PM</div>
<div class="abs rev" style="left:1368.2px;top:525.40px">Review</div>
<div id="modal">
 <div class="abs" style="left:25px;top:24.8px;font-size:18px;line-height:18px;font-weight:bold;color:#f3f4f7">+ Ingest Document</div>
 <div class="abs" style="left:24.75px;top:52.7px;font-size:12.75px;line-height:12.75px;color:#7f8793">Review and confirm the AI classification before staging.</div>
 <div class="abs" style="left:0;top:84.5px;width:558px;height:1px;background:#2f3540"></div>
 <div class="abs det" style="left:24px;top:105.25px;width:510px;height:36.5px">
   <span class="badge">DOCUMENT DETECTED</span>
   <span style="margin-left:10.5px;font-size:11.6px;font-weight:bold;color:#6fdd82">high confidence</span>
   <span style="margin-left:10.5px;font-size:12.5px;color:#bcc3ce">The Product Edit Process Doc.md</span>
 </div>
 <div class="abs lbl" style="left:24px;top:154.5px">DISPLAY TITLE (FRIENDLY NAME)</div>
 <div class="abs inp" style="left:24.5px;top:171.2px;width:510px;height:34.6px"><div class="abs" style="left:10.1px;top:9.7px;font-size:13.5px;line-height:13.5px;color:#eef1f5">The Product Edit Process Doc.md</div></div>
 <div class="abs lbl" style="left:24px;top:219.3px">SUMMARY</div>
 <div class="abs inp" style="left:24.5px;top:236px;width:510px;height:50.5px"><div class="abs" style="left:10.1px;top:9.4px;font-size:12.8px;line-height:12.8px;color:#bcc3cd">AI-generated summary will appear here after classification.</div>
   <svg class="abs" style="right:2px;bottom:2px" width="8" height="8" viewBox="0 0 8 8"><path d="M7 1L1 7M7 4.5L4.5 7" stroke="#9aa2ad" stroke-width="1"/></svg></div>
 <div class="abs lbl" style="left:24px;top:306.4px">DOMAIN <span class="sub">WHERE IT BELONGS</span></div>
 <div class="abs dcard" style="left:24px;top:323.25px"><div class="dt">Planning</div><div class="dd">Direction, priorities, sequencing, strategy</div></div>
 <div class="abs dcard sel" style="left:281px;top:323.25px"><div class="dt">Specification</div><div class="dd">Requirements, behavior, structure, what gets built</div></div>
 <div class="abs dcard" style="left:24px;top:375.05px"><div class="dt">Governance</div><div class="dd">Rules, standards, constraints, control logic</div></div>
 <div class="abs dcard" style="left:281px;top:375.05px"><div class="dt">Vision</div><div class="dd">Whole-product defining documents -- keep small</div></div>
 <div class="abs dcard" style="left:24px;top:426.85px"><div class="dt">Hydration</div><div class="dd">Session boot, agent profiles, behavior contracts</div></div>
 <div class="abs lbl" style="left:24px;top:486.5px">ROLE <span class="sub">WHAT JOB IT DOES</span></div>
 <div class="abs roles" style="left:24.5px;top:503.3px">
   <div class="rb sel">feature</div><div class="rb">architecture</div><div class="rb">experience</div><div class="rb">reference</div>
 </div>
 <div class="abs fmt" style="left:24.5px;top:545.25px;width:510px;height:63.6px">
   <div class="abs lbl" style="left:9.4px;top:9px">FORMAT <span class="sub f">(AUTO-DETECTED . CORRECT IF WRONG)</span></div>
   <div class="abs chips" style="left:9.2px;top:29.6px">
     <span class="chip sel" style="width:73.15px">document</span><span class="chip" style="width:69.7px">wireframe</span><span class="chip" style="width:45.6px">code</span><span class="chip" style="width:50.6px">image</span><span class="chip" style="width:45.8px">table</span><span class="chip" style="width:60.9px">diagram</span>
   </div>
 </div>
 <div class="abs sumbox" style="left:24.5px;top:619.6px;width:510px;height:39.2px">
   <span style="margin-left:12.2px;font-size:12.7px;color:#c6cbd3">This document is:</span>
   <span class="pill" style="margin-left:6.4px;width:91.4px">specification</span>
   <span class="slash">/</span>
   <span class="pill" style="width:58.2px">feature</span>
   <span class="slash">/</span>
   <span class="pill" style="width:74.2px">document</span>
 </div>
 <div class="abs" style="left:0;top:679.75px;width:558px;height:1px;background:#2f3540"></div>
 <div class="abs btn2" style="left:238.3px;top:694.8px;width:67.1px;height:36.7px">Back</div>
 <div class="abs btn2" style="left:314px;top:694.8px;width:71.5px;height:36.7px">Close</div>
 <div class="abs cta" style="left:394.2px;top:694.8px;width:139.45px;height:36.7px">Confirm &amp; Stage</div>
</div>
<svg class="abs" style="left:1684px;top:393px" width="36" height="36" viewBox="0 0 36 36">
<circle cx="17.9" cy="17.9" r="16.6" fill="#000" stroke="#3c3c3c" stroke-width=".6"/>
<rect x="12" y="12.75" width="12" height="1.45" fill="#f4f4f4"/>
<rect x="15" y="17.1" width="9" height="1.3" fill="#e6e6e6"/>
<rect x="17" y="21.3" width="7" height="1.3" fill="#f4f4f4"/>
<circle cx="12.2" cy="21.4" r="4.6" fill="#000"/>
<circle cx="12.2" cy="21.4" r="3.8" fill="#fff"/>
<path d="M12.2 19.6L14 22.9H10.4z" fill="#111"/>
</svg>

</div></body></html>
